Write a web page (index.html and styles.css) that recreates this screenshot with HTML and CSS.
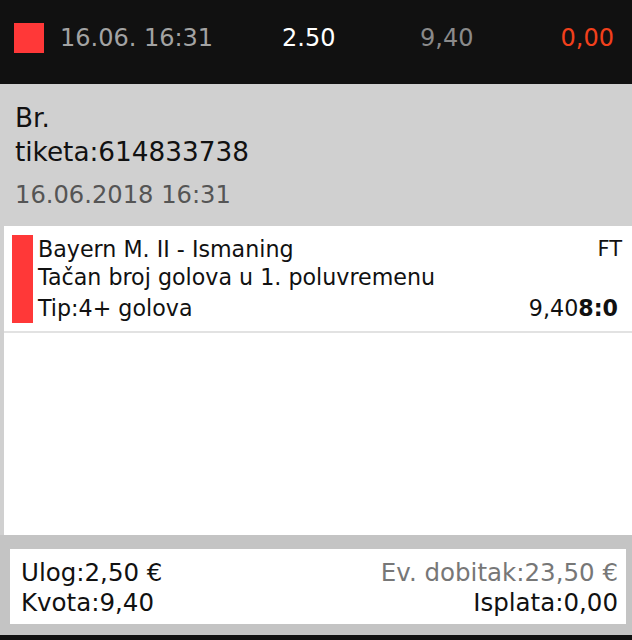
FILE: index.html
```html
<!DOCTYPE html>
<html lang="hr">
<head>
<meta charset="utf-8">
<title>Tiket</title>
<link rel="stylesheet" href="styles.css">
</head>
<body>
<div class="screen">
  <header class="top">
    <span class="flag"></span>
    <span class="t-date">16.06. 16:31</span>
    <span class="t-stake">2.50</span>
    <span class="t-odds">9,40</span>
    <span class="t-pay">0,00</span>
  </header>

  <section class="info">
    <div class="ticket">Br.<br>tiketa:614833738</div>
    <div class="issued">16.06.2018 16:31</div>
  </section>

  <section class="events">
    <div class="event">
      <span class="event-bar"></span>
      <div class="event-body">
        <div class="row"><span>Bayern M. II - Ismaning</span><span class="status">FT</span></div>
        <div class="row">Tačan broj golova u 1. poluvremenu</div>
        <div class="row row-tip"><span>Tip:4+ golova</span><span class="odds">9,40<b class="score">8:0</b></span></div>
      </div>
    </div>
  </section>

  <footer class="summary">
    <div class="summary-box">
      <div class="sum-row"><span>Ulog:2,50 €</span><span class="muted">Ev. dobitak:23,50 €</span></div>
      <div class="sum-row"><span>Kvota:9,40</span><span>Isplata:0,00</span></div>
    </div>
  </footer>
  <div class="bottom-bar"></div>
</div>
</body>
</html>
```

FILE: styles.css
```css
* { box-sizing: border-box; }
html, body { margin: 0; padding: 0; }
body {
  width: 632px;
  height: 640px;
  overflow: hidden;
  font-family: "DejaVu Sans", Verdana, sans-serif;
  color: #111;
  background: #d0d0d0;
}
.screen {
  display: flex;
  flex-direction: column;
  width: 632px;
  height: 640px;
}

/* top bar */
.top {
  height: 84px;
  flex: none;
  background: #111111;
  display: flex;
  align-items: center;
  padding: 0 18px 8px 14px;
  font-size: 24px;
  line-height: 30px;
}
.flag {
  width: 30px;
  height: 30px;
  background: #ff3838;
  flex: none;
  margin-right: 16px;
}
.t-date { width: 222px; color: #a3a3a3; }
.t-stake { width: 138px; color: #ffffff; }
.t-odds { color: #8a8a8a; }
.t-pay { margin-left: auto; color: #f2401c; }

/* ticket info */
.info {
  height: 142px;
  flex: none;
  background: #d0d0d0;
  padding: 17px 15px 0;
}
.ticket {
  font-size: 26.3px;
  line-height: 34px;
  color: #111;
}
.issued {
  margin-top: 11px;
  font-size: 24.2px;
  line-height: 30px;
  color: #555;
}

/* events */
.events {
  flex: none;
  height: 309px;
  margin-left: 4px;
  background: #ffffff;
}
.event {
  display: flex;
  align-items: flex-start;
  padding: 9px 10px 6px 8px;
  border-bottom: 2px solid #e2e2e2;
  font-size: 22.2px;
}
.event-bar {
  width: 21px;
  height: 88px;
  background: #ff3838;
  flex: none;
  margin-right: 5px;
}
.event-body { flex: 1; }
.row {
  display: flex;
  justify-content: space-between;
  line-height: 28px;
  white-space: nowrap;
}
.row-tip { line-height: 34px; }
.status { font-size: 21px; }
.score { font-weight: bold; padding-right: 4px; }

/* summary */
.summary {
  flex: none;
  height: 100px;
  background: #c4c4c4;
  padding: 14px 6px 11px 10px;
}
.summary-box {
  background: #ffffff;
  height: 75px;
  padding: 9px 8px 6px 11px;
  font-size: 24.5px;
  line-height: 30px;
}
.sum-row {
  display: flex;
  justify-content: space-between;
  white-space: nowrap;
}
.muted { color: #777; }

.bottom-bar {
  flex: 1;
  background: #111111;
}
```
